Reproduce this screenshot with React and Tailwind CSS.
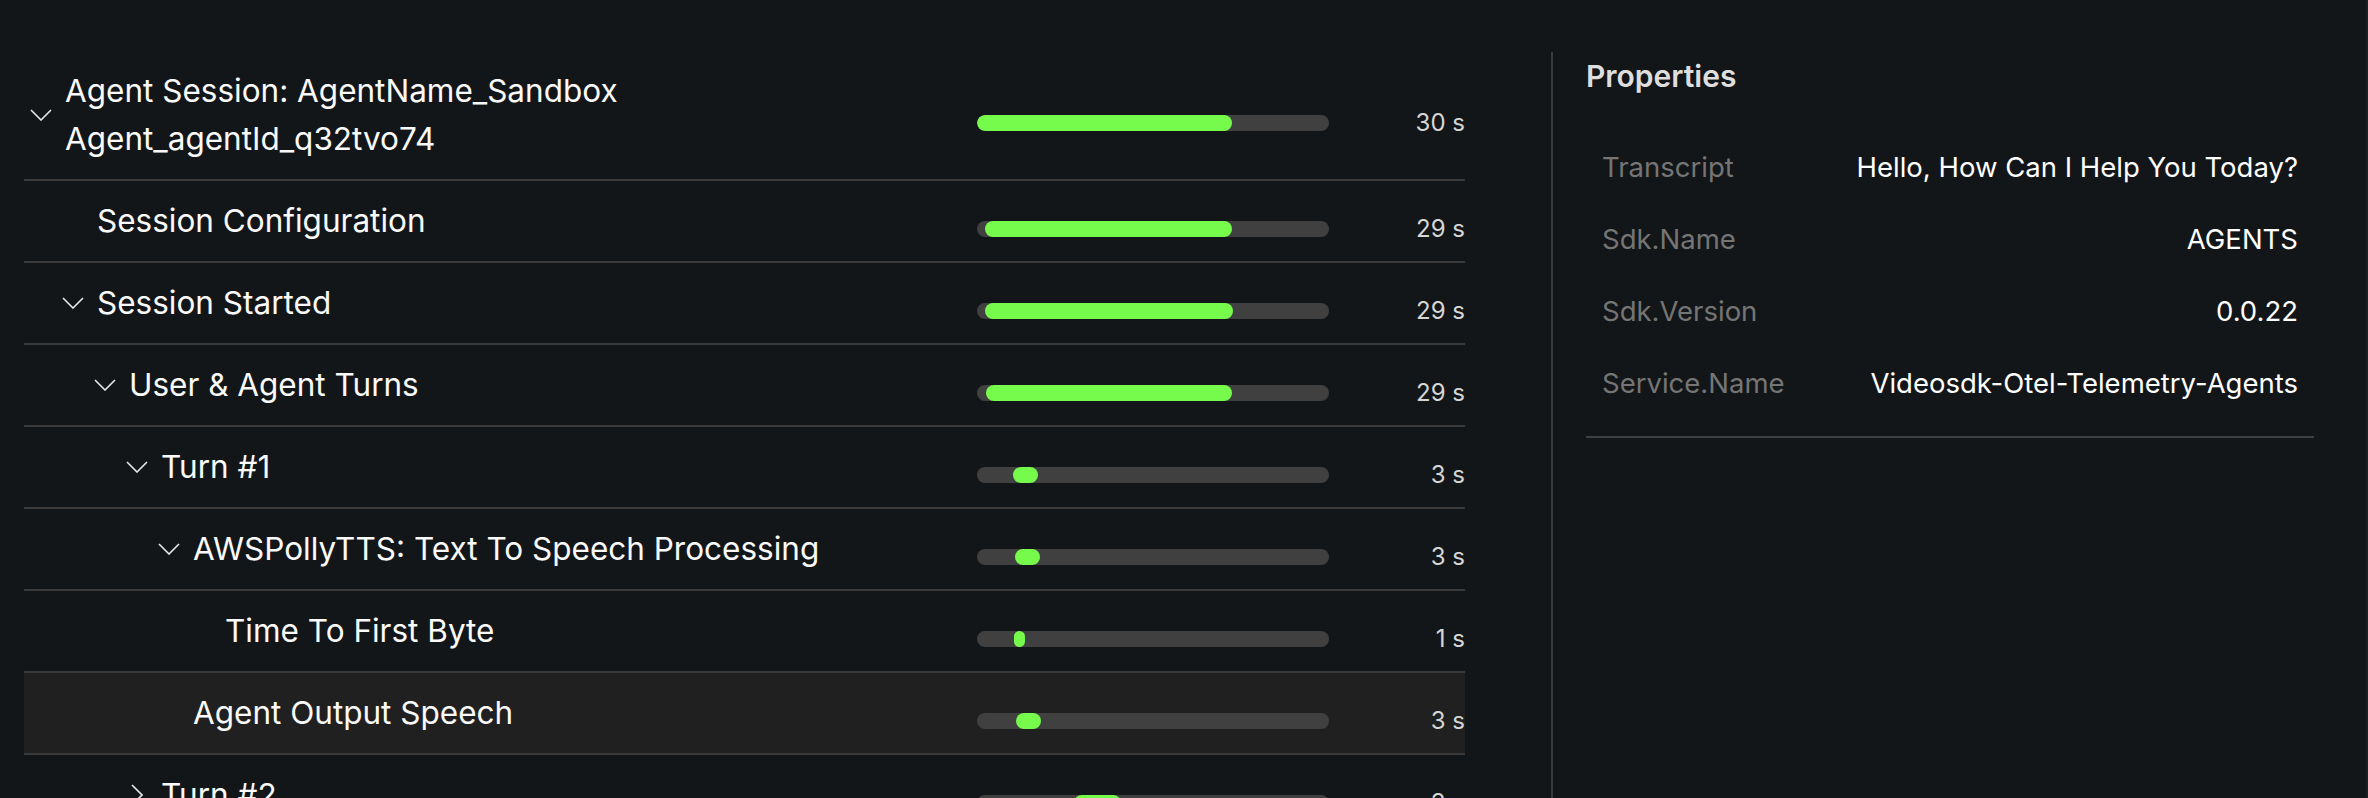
import React from "react";

const indents = ["pl-0", "pl-[32px]", "pl-[64px]", "pl-[96px]", "pl-[128px]", "pl-[160px]"];

const spans = [
  { lines: ["Agent Session: AgentName_Sandbox", "Agent_agentId_q32tvo74"], depth: 0, open: true, start: 0, width: 255, time: "30 s" },
  { lines: ["Session Configuration"], depth: 1, start: 8, width: 247, time: "29 s" },
  { lines: ["Session Started"], depth: 1, open: true, start: 8, width: 248, time: "29 s" },
  { lines: ["User & Agent Turns"], depth: 2, open: true, start: 9, width: 246, time: "29 s" },
  { lines: ["Turn #1"], depth: 3, open: true, start: 36, width: 25, time: "3 s" },
  { lines: ["AWSPollyTTS: Text To Speech Processing"], depth: 4, open: true, start: 38, width: 25, time: "3 s" },
  { lines: ["Time To First Byte"], depth: 5, start: 37, width: 11, time: "1 s" },
  { lines: ["Agent Output Speech"], depth: 4, start: 39, width: 25, time: "3 s", active: true },
  { lines: ["Turn #2"], depth: 3, open: false, start: 97, width: 47, time: "3 s" },
  { lines: ["Turn #3"], depth: 3, open: false, start: 150, width: 40, time: "2 s" },
];

const properties = [
  ["Transcript", "Hello, How Can I Help You Today?"],
  ["Sdk.Name", "AGENTS"],
  ["Sdk.Version", "0.0.22"],
  ["Service.Name", "Videosdk-Otel-Telemetry-Agents"],
];

function Chevron({ open }) {
  if (open === undefined) return null;
  return open ? (
    <svg width="22" height="12" viewBox="0 0 22 12" className="ml-[6px]">
      <polyline points="1,1 11,11 21,1" fill="none" stroke="#e8e8e8" strokeWidth="1.6" />
    </svg>
  ) : (
    <svg width="12" height="22" viewBox="0 0 12 22" className="ml-[11px]">
      <polyline points="1,1 11,11 1,21" fill="none" stroke="#e8e8e8" strokeWidth="1.6" />
    </svg>
  );
}

function SpanRow({ span }) {
  return (
    <div
      className={`flex items-center py-[16px] border-b-2 border-[#3a3a3a] ${
        span.active ? "bg-[#202020]" : ""
      }`}
    >
      {/* name */}
      <div className={`flex-1 flex items-center ${indents[span.depth]}`}>
        <div className="w-[41px] shrink-0 flex items-center">
          <Chevron open={span.open} />
        </div>
        <div className="text-[31.5px] leading-[48px] text-[#fafafa]">
          {span.lines.map((l) => (
            <div key={l}>{l}</div>
          ))}
        </div>
      </div>

      {/* bar */}
      <div className="w-[352px] mt-[15px]">
        <div className="flex h-[16px] rounded-full bg-[#404040] overflow-hidden">
          <div
            className="h-full rounded-full bg-[#76fb4c]"
            style={{ marginLeft: span.start, width: span.width }}
          />
        </div>
      </div>

      {/* duration */}
      <div className="w-[136px] mt-[15px] text-right text-[24px] leading-[32px] text-[#d6d6d6]">
        {span.time}
      </div>
    </div>
  );
}

export default function App() {
  return (
    <div className="h-screen w-full overflow-hidden bg-[#131619] flex font-['Inter',sans-serif] border-r-2 border-[#1d2023]">
      {/* Trace tree */}
      <div className="w-[1465px] shrink-0 pl-[24px] pt-[51px]">
        {spans.map((s, i) => (
          <SpanRow key={i} span={s} />
        ))}
      </div>

      {/* Properties panel */}
      <div className="flex-1 ml-[86px] mt-[52px] border-l-2 border-[#3a3a3a] pl-[33px] pr-[52px]">
        <h2 className="text-[30px] leading-[48px] font-semibold text-[#dedede]">Properties</h2>
        <div className="mt-[32px] px-[16px] pb-[16px] border-b-2 border-[#3f3f3f]">
          {properties.map(([k, v]) => (
            <div key={k} className="h-[72px] flex items-center justify-between text-[27.5px]">
              <span className="text-[#757575]">{k}</span>
              <span className="text-white">{v}</span>
            </div>
          ))}
        </div>
      </div>
    </div>
  );
}
